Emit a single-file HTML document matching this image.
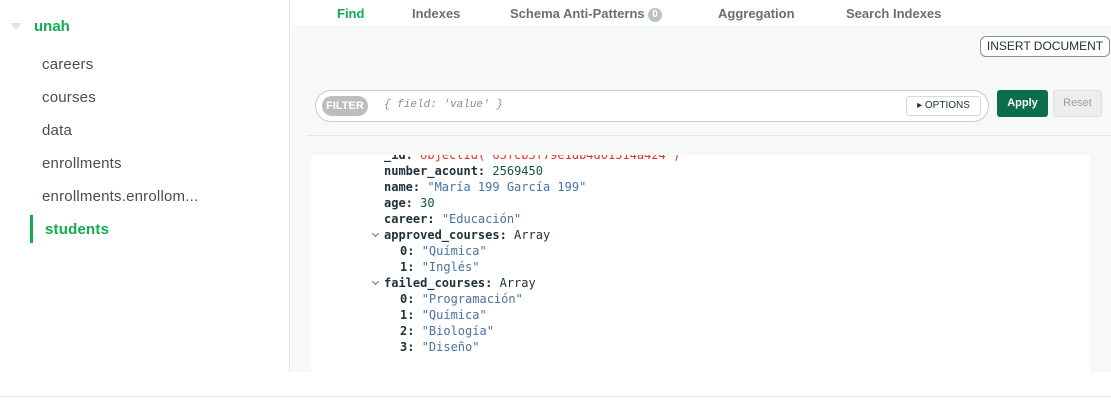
<!DOCTYPE html>
<html><head><meta charset="utf-8"><style>
*{margin:0;padding:0;box-sizing:border-box}
body{width:1111px;height:402px;background:#fff;font-family:"Liberation Sans",sans-serif;position:relative;overflow:hidden}
.side{position:absolute;left:0;top:0;width:290px;height:372px;border-right:1px solid #e4e6e6;background:#fff}
.tri{position:absolute;left:10px;top:23px;width:0;height:0;border-left:6px solid transparent;border-right:6px solid transparent;border-top:7px solid #e3e5e5}
.db{position:absolute;left:34px;top:18px;font-size:15px;font-weight:bold;color:#13aa52}
.it{position:absolute;left:42px;font-size:15px;color:#494d4d;letter-spacing:0.2px}
.sel{position:absolute;left:30px;top:215px;width:3px;height:28px;background:#13aa52}
.main{position:absolute;left:291px;top:25px;width:820px;height:347px;background:#f7f8f8}
.tab{position:absolute;top:6px;font-size:13px;font-weight:bold;color:#6b6f6f}
.badge{display:inline-block;background:#b8c4c2;color:#fff;border-radius:7px;font-size:10px;padding:0 4px;line-height:14px;vertical-align:1px}
.ins{position:absolute;left:980px;top:36px;width:130px;height:21px;border:1px solid #8a8f8f;border-radius:6px;background:#fff;font-size:12px;color:#21313c;text-align:center;line-height:19px}
.bar{position:absolute;left:315px;top:90px;width:674px;height:32px;border:1px solid #c9cccc;border-radius:16px;background:#fff}
.filt{position:absolute;left:6px;top:5px;width:46px;height:20px;border-radius:10px;background:#bdbdbd;color:#fff;font-size:11px;font-weight:bold;text-align:center;line-height:20px}
.ph{position:absolute;left:68px;top:8px;font-family:"Liberation Mono",monospace;font-style:italic;font-size:11px;color:#8a8f8f}
.opt{position:absolute;left:906px;top:96px;width:75px;height:20px;border:1px solid #d7dada;border-radius:3px;background:#fff;font-size:10px;color:#21313c;text-align:center;line-height:18px}
.apply{position:absolute;left:997px;top:90px;width:51px;height:27px;background:#0a6e4a;border-radius:3px;color:#fff;font-size:11px;font-weight:bold;text-align:center;line-height:27px}
.reset{position:absolute;left:1053px;top:90px;width:49px;height:27px;background:#eceeee;border:1px solid #dfe1e1;border-radius:3px;color:#9aa0a0;font-size:11px;text-align:center;line-height:25px}
.hr{position:absolute;left:306px;top:135px;width:805px;height:1px;background:#e4e6e6}
.doc{position:absolute;left:311px;top:155px;width:779px;height:217px;background:#fff;overflow:hidden}
.ln{position:absolute;font-family:"DejaVu Sans Mono","Liberation Mono",monospace;font-size:12px;color:#21313c;white-space:pre;line-height:16px}
.k{font-weight:bold}
.s{color:#4872a4}.n{color:#0e5a3c}.r{color:#e3352c}
.chev{position:absolute;width:5px;height:5px;border-right:1px solid #6b6f6f;border-bottom:1px solid #6b6f6f;transform:rotate(45deg)}
.bot{position:absolute;left:0;top:396px;width:1111px;height:1px;background:#e4e6e6}
</style></head><body>
<div class="side">
<div class="tri"></div><div class="db">unah</div>
<div class="it" style="top:56px">careers</div>
<div class="it" style="top:89px">courses</div>
<div class="it" style="top:122px">data</div>
<div class="it" style="top:155px">enrollments</div>
<div class="it" style="top:188px">enrollments.enrollom...</div>
<div class="sel"></div>
<div class="it" style="top:221px;left:45px;font-weight:bold;color:#13aa52">students</div>
</div>
<div class="tab" style="left:337px;color:#13aa52">Find</div>
<div class="tab" style="left:412px">Indexes</div>
<div class="tab" style="left:510px">Schema Anti-Patterns <span class="badge">0</span></div>
<div class="tab" style="left:718px">Aggregation</div>
<div class="tab" style="left:846px">Search Indexes</div>
<div class="main"></div>
<div class="ins">INSERT DOCUMENT</div>
<div class="bar"><div class="filt">FILTER</div><div class="ph">{ field: 'value' }</div></div>
<div class="opt">▸ OPTIONS</div>
<div class="apply">Apply</div>
<div class="reset">Reset</div>
<div class="hr"></div>
<div class="doc">
<div class="ln" style="left:73px;top:-8px"><span class="k">_id:</span> <span class="r">ObjectId('65fcb5f79e1db4d01514a424')</span></div>
<div class="ln" style="left:73px;top:8px"><span class="k">number_acount:</span> <span class="n">2569450</span></div>
<div class="ln" style="left:73px;top:24px"><span class="k">name:</span> <span class="s">"María 199 García 199"</span></div>
<div class="ln" style="left:73px;top:40px"><span class="k">age:</span> <span class="n">30</span></div>
<div class="ln" style="left:73px;top:56px"><span class="k">career:</span> <span class="s">"Educación"</span></div>
<div class="chev" style="left:62px;top:76px"></div>
<div class="ln" style="left:73px;top:72px"><span class="k">approved_courses:</span> Array</div>
<div class="ln" style="left:89px;top:88px"><span class="k">0:</span> <span class="s">"Química"</span></div>
<div class="ln" style="left:89px;top:104px"><span class="k">1:</span> <span class="s">"Inglés"</span></div>
<div class="chev" style="left:62px;top:124px"></div>
<div class="ln" style="left:73px;top:120px"><span class="k">failed_courses:</span> Array</div>
<div class="ln" style="left:89px;top:136px"><span class="k">0:</span> <span class="s">"Programación"</span></div>
<div class="ln" style="left:89px;top:152px"><span class="k">1:</span> <span class="s">"Química"</span></div>
<div class="ln" style="left:89px;top:168px"><span class="k">2:</span> <span class="s">"Biología"</span></div>
<div class="ln" style="left:89px;top:184px"><span class="k">3:</span> <span class="s">"Diseño"</span></div>
</div>
<div class="bot"></div>
</body></html>
